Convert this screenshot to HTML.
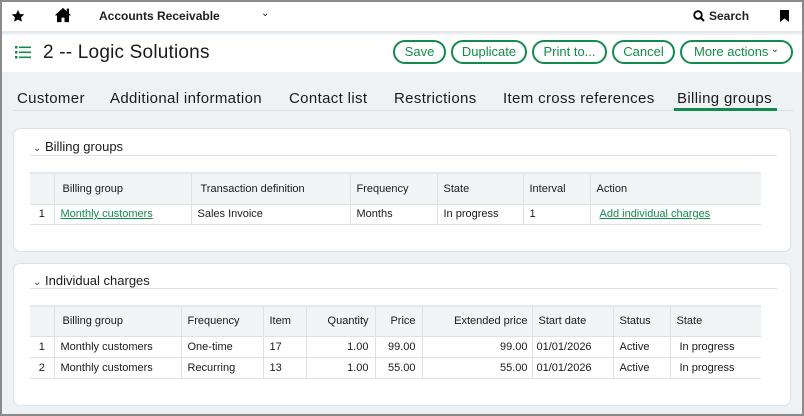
<!DOCTYPE html>
<html><head><meta charset="utf-8"><style>
*{margin:0;padding:0;box-sizing:border-box}
body{width:804px;height:416px;overflow:hidden;font-family:"Liberation Sans",Arial,sans-serif;color:#1a1a1a;background:#eff2f4;position:relative}
.frame{position:absolute;left:0;top:0;width:804px;height:416px;border:2px solid #8a8a8a;z-index:10;pointer-events:none}
.a{position:absolute;white-space:nowrap}
.top{position:absolute;left:0;top:0;width:804px;height:33px;background:#fff;border-bottom:2px solid #e3e8ec}
.title{position:absolute;left:0;top:35px;width:804px;height:37px;background:#fff}
.btn{position:absolute;top:40px;height:24px;border:2px solid #138a4e;border-radius:12px;color:#138a4e;font-size:13px;line-height:20px;text-align:center;background:#fff}
.tab{position:absolute;top:90px;font-size:15px;letter-spacing:0.35px;color:#1a1a1a}
.panel{position:absolute;left:13px;width:778px;background:#fff;border:1px solid #dde2e6;border-radius:7px}
.sh{position:absolute;font-size:13px}
.hl{position:absolute;left:30px;width:747px;height:1px;background:#dde2e6}
.t{position:absolute;left:30px;border-collapse:collapse;font-size:11px;table-layout:fixed}
.t td{border-left:1px solid #dde2e6;border-bottom:1px solid #dde2e6;padding:0 6px;white-space:nowrap;overflow:hidden}
.t td:first-child{border-left:none;text-align:center}
.t tr.h td{background:#f2f4f5;border-top:2px solid #e3e8ec}
.r{text-align:right}
a{color:#138a4e;text-decoration:underline}
</style></head><body>
<div class="frame"></div>
<div class="top"></div>
<svg class="a" style="left:11px;top:9px" width="14" height="14" viewBox="0 0 24 24"><path d="M12 1.5l3.2 7 7.6.8-5.7 5.1 1.6 7.5L12 18l-6.7 3.9 1.6-7.5L1.2 9.3l7.6-.8z" fill="#000"/></svg>
<svg class="a" style="left:54px;top:7px" width="18" height="16" viewBox="0 0 24 21"><path d="M12 1L1 11h3v9h6v-6h4v6h6v-9h3z" fill="#000"/><rect x="17" y="2" width="3" height="6" fill="#000"/></svg>
<div class="a" style="left:99px;top:9px;font-size:12px;font-weight:bold;color:#222">Accounts Receivable</div>
<div class="a" style="left:261px;top:8px;font-size:10px">&#8964;</div>
<svg class="a" style="left:693px;top:10px" width="12" height="12" viewBox="0 0 12 12"><circle cx="5" cy="5" r="3.8" stroke="#000" stroke-width="1.8" fill="none"/><path d="M7.8 7.8L11 11" stroke="#000" stroke-width="2"/></svg>
<div class="a" style="left:709px;top:9px;font-size:12px;font-weight:bold;color:#222">Search</div>
<svg class="a" style="left:780px;top:10px" width="9" height="12" viewBox="0 0 9 12"><path d="M0 0h9v12L4.5 8.5 0 12z" fill="#000"/></svg>
<div class="title"></div>
<svg class="a" style="left:15px;top:45px" width="16" height="14" viewBox="0 0 16 14"><g fill="#138a4e"><rect x="0" y="1" width="2.5" height="2.5"/><rect x="0" y="6" width="2.5" height="2.5"/><rect x="0" y="11" width="2.5" height="2.5"/><rect x="4" y="1.5" width="12" height="1.6"/><rect x="4" y="6.5" width="12" height="1.6"/><rect x="4" y="11.5" width="12" height="1.6"/></g></svg>
<div class="a" style="left:43px;top:42px;font-size:19px;letter-spacing:0.2px;color:#1a1a1a">2 -- Logic Solutions</div>
<div class="btn" style="left:393px;width:53px">Save</div>
<div class="btn" style="left:451px;width:76px">Duplicate</div>
<div class="btn" style="left:532px;width:75px">Print to...</div>
<div class="btn" style="left:612px;width:63px">Cancel</div>
<div class="btn" style="left:680px;width:113px;text-align:left;padding-left:12px">More actions <span style="position:absolute;right:12px;top:-2px;font-size:10px;color:#333">&#8964;</span></div>
<div class="tab" style="left:17px">Customer</div>
<div class="tab" style="left:110px">Additional information</div>
<div class="tab" style="left:289px">Contact list</div>
<div class="tab" style="left:394px">Restrictions</div>
<div class="tab" style="left:503px">Item cross references</div>
<div class="tab" style="left:677px">Billing groups</div>
<div class="a" style="left:13px;top:110px;width:781px;height:1px;background:#dde2e6"></div>
<div class="a" style="left:674px;top:108px;width:103px;height:3px;background:#138a4e"></div>

<div class="panel" style="top:128px;height:124px"></div>
<div class="sh" style="left:33px;top:139px"><span style="font-size:10px;color:#444">&#8964;</span> Billing groups</div>
<div class="hl" style="top:155px;left:30px"></div>
<table class="t" style="top:172px;width:731px">
<colgroup><col style="width:24px"><col style="width:137px"><col style="width:159px"><col style="width:87px"><col style="width:86px"><col style="width:67px"><col style="width:171px"></colgroup>
<tr class="h" style="height:31px"><td></td><td style="padding-left:8px">Billing group</td><td style="padding-left:9px">Transaction definition</td><td>Frequency</td><td>State</td><td>Interval</td><td>Action</td></tr>
<tr style="height:20px"><td>1</td><td><a>Monthly customers</a></td><td>Sales Invoice</td><td>Months</td><td>In progress</td><td>1</td><td style="padding-left:9px"><a>Add individual charges</a></td></tr>
</table>

<div class="panel" style="top:263px;height:143px"></div>
<div class="sh" style="left:33px;top:273px"><span style="font-size:10px;color:#444">&#8964;</span> Individual charges</div>
<div class="hl" style="top:288px"></div>
<table class="t" style="top:305px;width:731px">
<colgroup><col style="width:24px"><col style="width:127px"><col style="width:82px"><col style="width:43px"><col style="width:69px"><col style="width:47px"><col style="width:110px"><col style="width:81px"><col style="width:57px"><col style="width:91px"></colgroup>
<tr class="h" style="height:30px"><td></td><td style="padding-left:8px">Billing group</td><td>Frequency</td><td>Item</td><td class="r">Quantity</td><td class="r">Price</td><td class="r" style="padding-right:4px">Extended price</td><td>Start date</td><td>Status</td><td>State</td></tr>
<tr style="height:21px"><td>1</td><td>Monthly customers</td><td>One-time</td><td>17</td><td class="r">1.00</td><td class="r">99.00</td><td class="r" style="padding-right:4px">99.00</td><td style="padding-left:4px">01/01/2026</td><td>Active</td><td style="padding-left:9px">In progress</td></tr>
<tr style="height:21px"><td>2</td><td>Monthly customers</td><td>Recurring</td><td>13</td><td class="r">1.00</td><td class="r">55.00</td><td class="r" style="padding-right:4px">55.00</td><td style="padding-left:4px">01/01/2026</td><td>Active</td><td style="padding-left:9px">In progress</td></tr>
</table>
</body></html>
